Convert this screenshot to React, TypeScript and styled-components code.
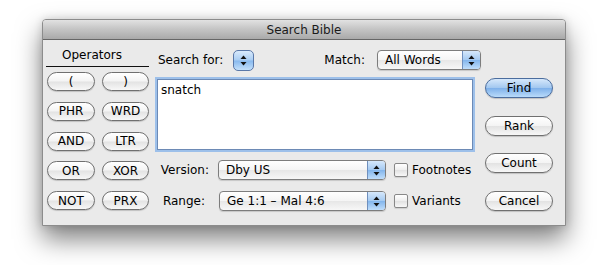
import React from 'react';
import styled, { createGlobalStyle } from 'styled-components';

const Global = createGlobalStyle`
  html, body { margin: 0; padding: 0; background: #ffffff; }
  body {
    font-family: "DejaVu Sans", "Liberation Sans", sans-serif;
    font-size: 12px;
    color: #000;
  }
`;

const Stage = styled.div`
  width: 605px;
  height: 265px;
  box-sizing: border-box;
  padding: 19px 0 0 42px;
  overflow: hidden;
`;

const Window = styled.div`
  width: 524px;
  height: 207px;
  box-sizing: border-box;
  border: 1px solid #8c8c8c;
  border-radius: 4px 4px 0 0;
  background: #eaeaea;
  box-shadow: 0 13px 26px rgba(0, 0, 0, 0.5), 0 0 8px rgba(0, 0, 0, 0.14);
  display: flex;
  flex-direction: column;
  overflow: hidden;
`;

const TitleBar = styled.div`
  height: 20px;
  flex: none;
  border-bottom: 1px solid #666;
  background: linear-gradient(#e2e2e2, #c6c6c6 45%, #a9a9a9);
  display: flex;
  align-items: center;
  justify-content: center;
  font-size: 12px;
  color: #1a1a1a;
  padding-top: 1px;
  box-sizing: border-box;
`;

const Body = styled.div`
  flex: 1;
  display: flex;
  padding-left: 3px;
`;

const OpColumn = styled.div`
  width: 103px;
  display: flex;
  flex-direction: column;
`;

const OpHeader = styled.div`
  margin-top: 8px;
  line-height: 14px;
  padding: 0 0 4px 16px;
  border-bottom: 1px solid #111;
`;

const OpGrid = styled.div`
  margin-top: 5px;
  margin-left: 1px;
  display: grid;
  grid-template-columns: 48px 47px;
  grid-auto-rows: 19px;
  column-gap: 7px;
  row-gap: 10.8px;
`;

const Pill = styled.div<{ $default?: boolean; $h?: number }>`
  height: ${(p) => p.$h ?? 20}px;
  box-sizing: border-box;
  border-radius: 11px;
  border: 1px solid ${(p) => (p.$default ? '#4b6d9e' : '#707070')};
  background: ${(p) =>
    p.$default
      ? 'linear-gradient(#d6e8fb, #a3c8f0 48%, #7fb1ea 52%, #b9dbfa)'
      : 'linear-gradient(#ffffff, #f4f4f4 48%, #e3e3e3 52%, #f7f7f7)'};
  box-shadow: 0 1px 1px rgba(0, 0, 0, 0.18);
  display: flex;
  align-items: center;
  justify-content: center;
  font-size: 12px;
  line-height: 1;
  color: #000;
`;

const Main = styled.div`
  margin-left: 6px;
  width: 326px;
  display: flex;
  flex-direction: column;
`;

const TopRow = styled.div`
  margin-top: 9px;
  height: 22px;
  display: flex;
  align-items: center;
`;

const Label = styled.span<{ $w?: number; $right?: number }>`
  flex: none;
  width: ${(p) => (p.$w ? `${p.$w}px` : 'auto')};
  box-sizing: border-box;
  text-align: ${(p) => (p.$right !== undefined ? 'right' : 'left')};
  padding-right: ${(p) => p.$right ?? 0}px;
  white-space: nowrap;
`;

const SearchLabel = styled(Label)`
  padding-left: 3px;
`;

const Spacer = styled.div`
  flex: 1;
`;

const Stepper = styled.div`
  width: 21px;
  height: 21px;
  box-sizing: border-box;
  border-radius: 5px;
  border: 1px solid #5a78a8;
  background: linear-gradient(#d9eafc, #a9cdf3 48%, #88b9ee 52%, #c3e0fb);
  display: flex;
  align-items: center;
  justify-content: center;
`;

const Popup = styled.div<{ $w: number }>`
  width: ${(p) => p.$w}px;
  height: 20px;
  flex: none;
  box-sizing: border-box;
  border: 1px solid #7d7d7d;
  border-radius: 4px;
  overflow: hidden;
  display: flex;
  background: linear-gradient(#ffffff, #f5f5f5 48%, #e7e7e7 52%, #f7f7f7);
  box-shadow: 0 1px 1px rgba(0, 0, 0, 0.15);
`;

const PopupText = styled.div`
  flex: 1;
  padding-left: 7px;
  display: flex;
  align-items: center;
  white-space: nowrap;
`;

const PopupArrows = styled.div`
  width: 17px;
  flex: none;
  border-left: 1px solid #6f8fbd;
  background: linear-gradient(#d6e8fb, #a6cbf2 48%, #84b6ec 52%, #c0defb);
  display: flex;
  align-items: center;
  justify-content: center;
`;

const TextArea = styled.div`
  margin: 8px 0 0 2px;
  width: 316px;
  height: 71px;
  box-sizing: border-box;
  border: 1px solid #6d8ab5;
  background: #fff;
  box-shadow: 0 0 0 2px #9dc0ea;
  padding: 3px 3px;
  line-height: 14px;
`;

const FieldRow = styled.div<{ $top: number }>`
  margin-top: ${(p) => p.$top}px;
  height: 20px;
  display: flex;
  align-items: center;
`;

const Check = styled.div`
  margin-left: 8px;
  width: 14px;
  height: 14px;
  flex: none;
  box-sizing: border-box;
  border: 1px solid #888;
  border-radius: 2px;
  background: linear-gradient(#ffffff, #eeeeee 50%, #e2e2e2 52%, #f8f8f8);
  box-shadow: 0 1px 1px rgba(0, 0, 0, 0.12);
`;

const CheckLabel = styled.span`
  margin-left: 4px;
  white-space: nowrap;
`;

const RightColumn = styled.div`
  margin: 38px 0 0 4px;
  width: 68px;
  height: 133px;
  display: flex;
  flex-direction: column;
  justify-content: space-between;
`;

const Arrows = () => (
  <svg width="7" height="11" viewBox="0 0 7 11">
    <path d="M3.5 0.5 L6.5 4 L0.5 4 Z" fill="#111" />
    <path d="M0.5 7 L6.5 7 L3.5 10.5 Z" fill="#111" />
  </svg>
);

const ops = ['(', ')', 'PHR', 'WRD', 'AND', 'LTR', 'OR', 'XOR', 'NOT', 'PRX'];

export default function App() {
  return (
    <Stage>
      <Global />
      <Window>
        <TitleBar>Search Bible</TitleBar>
        <Body>
          <OpColumn>
            <OpHeader>Operators</OpHeader>
            <OpGrid>
              {ops.map((o) => (
                <Pill key={o} $h={19}>
                  {o}
                </Pill>
              ))}
            </OpGrid>
          </OpColumn>
          <Main>
            <TopRow>
              <SearchLabel $w={78}>Search for:</SearchLabel>
              <Stepper>
                <Arrows />
              </Stepper>
              <Spacer />
              <Label $right={12}>Match:</Label>
              <Popup $w={104}>
                <PopupText>All Words</PopupText>
                <PopupArrows>
                  <Arrows />
                </PopupArrows>
              </Popup>
            </TopRow>
            <TextArea>snatch</TextArea>
            <FieldRow $top={10}>
              <Label $w={63} $right={9}>
                Version:
              </Label>
              <Popup $w={168}>
                <PopupText>Dby US</PopupText>
                <PopupArrows>
                  <Arrows />
                </PopupArrows>
              </Popup>
              <Check />
              <CheckLabel>Footnotes</CheckLabel>
            </FieldRow>
            <FieldRow $top={11}>
              <Label $w={64} $right={14}>
                Range:
              </Label>
              <Popup $w={167}>
                <PopupText>Ge 1:1 – Mal 4:6</PopupText>
                <PopupArrows>
                  <Arrows />
                </PopupArrows>
              </Popup>
              <Check />
              <CheckLabel>Variants</CheckLabel>
            </FieldRow>
          </Main>
          <RightColumn>
            <Pill $default>Find</Pill>
            <Pill>Rank</Pill>
            <Pill>Count</Pill>
            <Pill>Cancel</Pill>
          </RightColumn>
        </Body>
      </Window>
    </Stage>
  );
}
